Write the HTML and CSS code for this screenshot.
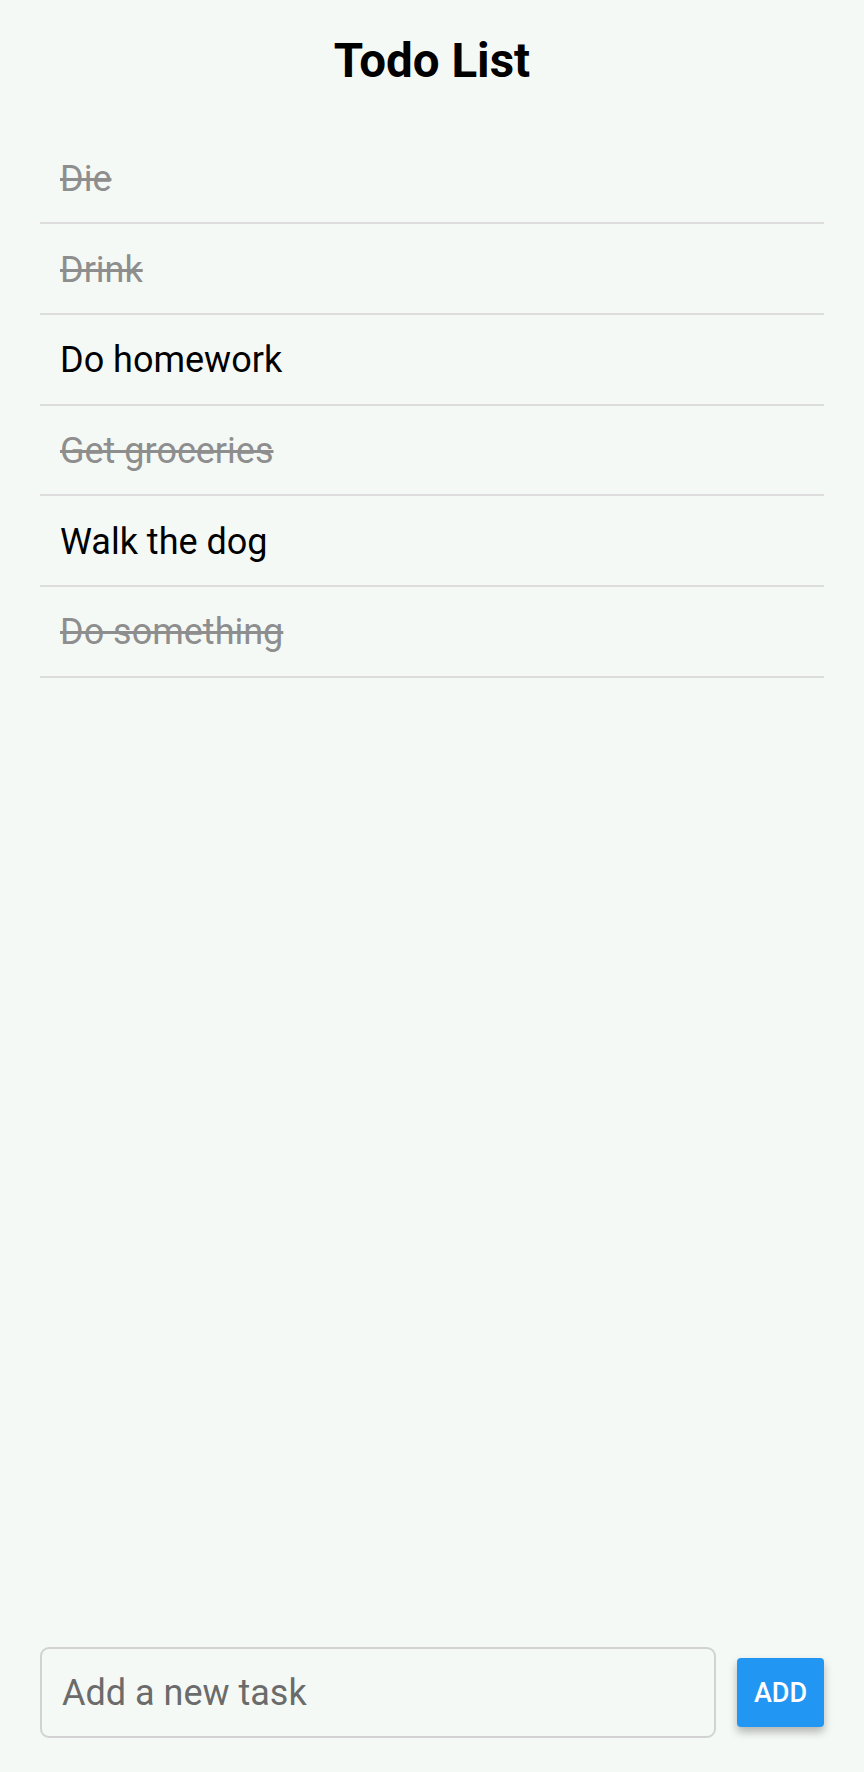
FILE: index.html
```html
<!DOCTYPE html>
<html lang="en">
<head>
<meta charset="utf-8">
<title>Todo List</title>
<link rel="stylesheet" href="styles.css">
</head>
<body>
<div class="app">
  <h1 class="title">Todo List</h1>
  <ul class="list">
    <li class="item done">Die</li>
    <li class="item done">Drink</li>
    <li class="item">Do homework</li>
    <li class="item done">Get groceries</li>
    <li class="item">Walk the dog</li>
    <li class="item done">Do something</li>
  </ul>
  <div class="composer">
    <input class="task-input" type="text" placeholder="Add a new task">
    <button class="add-btn" type="button">ADD</button>
  </div>
</div>
</body>
</html>
```

FILE: styles.css
```css
html, body {
  margin: 0;
  padding: 0;
  background: #f5f9f6;
}

body {
  font-family: Roboto, "Noto Sans", "Liberation Sans", sans-serif;
  color: #000;
}

.app {
  height: 1772px;
  display: flex;
  flex-direction: column;
  padding: 33px 40px 34px 40px;
  box-sizing: border-box;
}

.title {
  margin: 0;
  font-size: 47.5px;
  font-weight: 700;
  text-align: center;
  line-height: 56px;
}

.list {
  list-style: none;
  margin: 44.5px 0 0 0;
  padding: 0;
  flex: 1;
}

.item {
  font-size: 36px;
  line-height: 42px;
  padding: 24.5px 20px 22.2px 20px;
  border-bottom: 2px solid #dcdcdc;
}

.item.done {
  color: #8e8e8e;
  text-decoration: line-through;
}

.composer {
  display: flex;
  align-items: center;
  gap: 21px;
}

.task-input {
  flex: 1;
  height: 91px;
  box-sizing: border-box;
  border: 2px solid #d2d2d2;
  border-radius: 9px;
  background: transparent;
  padding: 0 20px;
  font-family: Roboto, "Noto Sans", "Liberation Sans", sans-serif;
  font-size: 36px;
  color: #222;
  outline: none;
}

.task-input::placeholder {
  color: #6b6b6b;
}

.add-btn {
  width: 87px;
  height: 69px;
  border: none;
  border-radius: 4px;
  background: #2196f3;
  color: #fff;
  font-family: Roboto, "Noto Sans", "Liberation Sans", sans-serif;
  font-size: 27px;
  font-weight: 500;
  padding: 0;
  box-shadow: 0 5px 9px rgba(0, 0, 0, 0.28);
}
```
